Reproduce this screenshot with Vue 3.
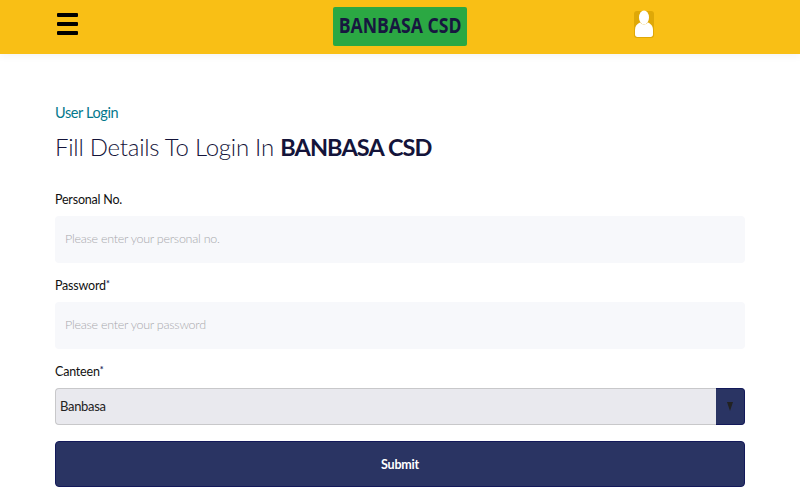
<script setup>
const title = "BANBASA CSD";
</script>

<template>
  <div class="page">
    <header class="topbar">
      <button class="burger" type="button" aria-label="Menu">
        <span></span><span></span><span></span>
      </button>
      <div class="logo"><span>{{ title }}</span></div>
      <div class="avatar">
        <svg width="20" height="28" viewBox="0 0 20 28">
          <rect x="0" y="1" width="20" height="27" rx="3" fill="#dfa807" />
          <ellipse cx="10" cy="7.500" rx="5" ry="7" fill="#fff" />
          <path d="M6 12.500C3 14 1 16 1 20v4.500C1 26 2 27 3.500 27h13c1.500 0 2.500-1 2.500-2.500V20c0-4-2-6-5-7.500-2.500 2.500-5.500 2.500-8 0z" fill="#fff" />
        </svg>
      </div>
    </header>

    <main class="content">
      <p class="eyebrow">User Login</p>
      <h1 class="heading">Fill Details To Login In <strong>{{ title }}</strong></h1>

      <form class="form" @submit.prevent>
        <div class="field">
          <label>Personal No.</label>
          <input type="text" placeholder="Please enter your personal no." />
        </div>
        <div class="field">
          <label>Password<sup>*</sup></label>
          <input type="password" placeholder="Please enter your password" />
        </div>
        <div class="field">
          <label>Canteen<sup>*</sup></label>
          <div class="select">
            <span class="value">Banbasa</span>
            <span class="arrow"><i></i></span>
          </div>
        </div>
        <button class="submit" type="submit">Submit</button>
      </form>
    </main>
  </div>
</template>

<style>
html,
body {
  margin: 0;
  background: #fff;
}
</style>

<style scoped>
.page {
  width: 800px;
  height: 500px;
  overflow: hidden;
  font-family: "Lato", "Liberation Sans", sans-serif;
  color: #14143a;
}

.topbar {
  height: 54px;
  background: #f9bf15;
  display: grid;
  grid-template-columns: 1fr 134px 1fr;
  align-items: start;
  box-shadow: 0 2px 8px rgba(0, 0, 0, 0.05);
}

.burger {
  display: flex;
  flex-direction: column;
  gap: 4.5px;
  width: 21px;
  margin: 12.5px 0 0 57px;
  padding: 0;
  border: 0;
  background: none;
}

.burger span {
  height: 4.5px;
  border-radius: 1px;
  background: #000;
}

.logo {
  box-sizing: border-box;
  margin-top: 7px;
  height: 39px;
  padding-bottom: 3px;
  display: flex;
  align-items: center;
  justify-content: center;
  background: #2ba843;
  border-radius: 2px;
  font-family: "Open Sans", sans-serif;
  font-size: 21px;
  font-weight: 700;
  color: #17173f;
  white-space: nowrap;
  overflow: hidden;
}

.logo span {
  flex: none;
  transform: scaleX(0.84);
}

.avatar {
  margin: 10px 0 0 167px;
  height: 28px;
}

.avatar svg {
  display: block;
}

.content {
  padding: 49px 55px 0;
}

.eyebrow {
  margin: 0;
  font-size: 14.5px;
  line-height: 20px;
  letter-spacing: -0.4px;
  color: #04788c;
}

.heading {
  margin: 6px 0 0;
  font-size: 24px;
  line-height: 36px;
  font-weight: 300;
  letter-spacing: -0.24px;
  color: #14143a;
}

.heading strong {
  font-size: 23.5px;
  font-weight: 700;
  letter-spacing: -0.9px;
}

.form {
  margin-top: 25px;
}

.field {
  margin-bottom: 13px;
}

.field label {
  display: block;
  font-size: 12.5px;
  line-height: 19px;
  letter-spacing: -0.2px;
  margin-bottom: 7px;
  color: #111;
}

.field sup {
  font-size: 9px;
  font-weight: 700;
  line-height: 0;
  vertical-align: 3px;
  color: #1c2a5c;
}

.field input {
  display: block;
  box-sizing: border-box;
  width: 100%;
  height: 47px;
  padding: 0 10px 3px;
  border: 0;
  border-radius: 4px;
  background: #f7f8fb;
  font-family: inherit;
  font-size: 12.5px;
  letter-spacing: -0.26px;
  font-weight: 300;
  outline: none;
}

.field input::placeholder {
  color: #a8a8ad;
}

.select {
  box-sizing: border-box;
  display: flex;
  height: 37px;
  border: 1px solid #c8c8ca;
  border-right: 0;
  border-radius: 4px;
  background: #e9e9ee;
}

.value {
  flex: 1;
  padding-left: 4px;
  font-size: 13px;
  letter-spacing: -0.3px;
  line-height: 35px;
  color: #222;
}

.arrow {
  width: 28px;
  margin: -1px 0;
  display: flex;
  align-items: center;
  justify-content: center;
  background: #2a3463;
  border: 1px solid #13195a;
  border-left: 0;
  border-radius: 0 4px 4px 0;
}

.arrow i {
  width: 0;
  height: 0;
  border-left: 3px solid transparent;
  border-right: 3px solid transparent;
  border-top: 9px solid #222;
}

.submit {
  display: block;
  box-sizing: border-box;
  width: 100%;
  height: 46px;
  margin-top: 16px;
  border: 1px solid #13195a;
  border-radius: 4px;
  background: #2a3463;
  font-family: inherit;
  font-size: 12.5px;
  letter-spacing: -0.2px;
  font-weight: 700;
  color: #fff;
}
</style>
